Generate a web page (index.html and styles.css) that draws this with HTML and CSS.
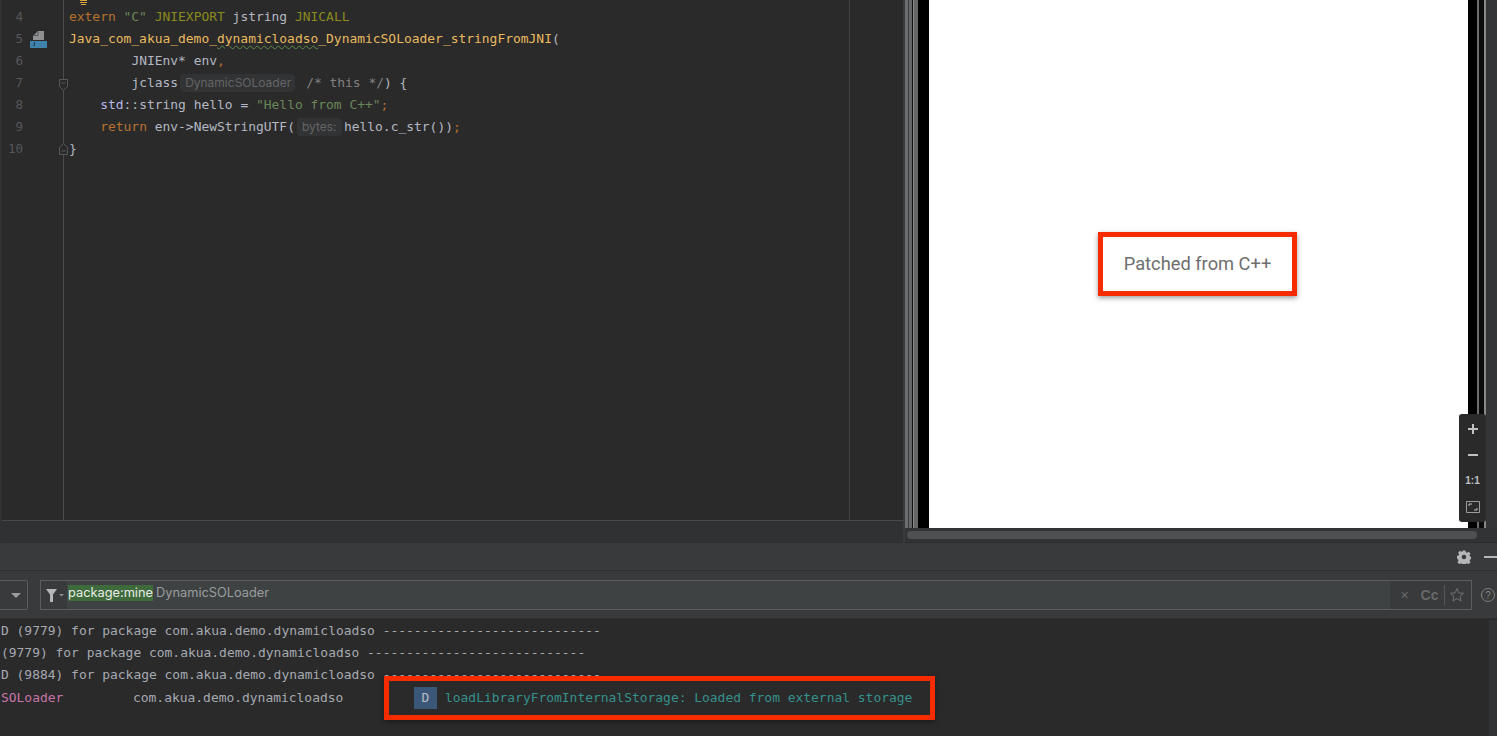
FILE: index.html
```html
<!DOCTYPE html>
<html lang="en">
<head>
<meta charset="utf-8">
<title>Android Studio</title>
<link rel="stylesheet" href="styles.css">
</head>
<body>
<div class="top">
  <section class="editor">
    <div class="editor-main">
      <div class="gutter">
        <div class="peek"></div>
        <div class="ln">4</div>
        <div class="ln">5
          <svg class="native-icon" width="18" height="18" viewBox="0 0 18 18"><path d="M3 9V5l5-5h6v9z" fill="#8f9193"/><path d="M8 .500v4H3.500" fill="none" stroke="#55575a"/><rect x="0" y="10" width="17" height="7" fill="#3f82ad"/><path d="M4.500 11v3.500H3" stroke="#24414f" stroke-width="1" fill="none"/></svg>
        </div>
        <div class="ln">6</div>
        <div class="ln">7
          <svg class="fold fold-start" width="11" height="15" viewBox="0 0 11 15"><path d="M1.500 1.500h8v7l-4 4-4-4zM3.500 5h4" fill="#2a2a2b" stroke="#55585a"/></svg>
        </div>
        <div class="ln">8</div>
        <div class="ln">9</div>
        <div class="ln">10
          <svg class="fold fold-end" width="11" height="15" viewBox="0 0 11 15"><path d="M1.500 13.500h8v-7l-4-4-4 4zM3.500 10h4" fill="#2a2a2b" stroke="#55585a"/></svg>
        </div>
      </div>
      <div class="code">
        <div class="peek"><svg class="bulb" width="7" height="6" viewBox="0 0 7 6"><path d="M0 .500h7M0 2.500h7M1 4.500h5" stroke="#d8a83c"/></svg></div>
        <div class="cl"><span class="kw">extern</span> <span class="str">"C"</span> <span class="mac">JNIEXPORT</span> <span class="id">jstring</span> <span class="mac">JNICALL</span></div>
        <div class="cl fn">Java_com_akua_demo_<span class="squig">dynamicloadso</span>_DynamicSOLoader_stringFromJNI<span class="id">(</span></div>
        <div class="cl i2"><span class="id">JNIEnv* env</span><span class="kw">,</span></div>
        <div class="cl i2"><span class="id">jclass</span><span class="hint hint-class">DynamicSOLoader</span><span class="cm">/* this */</span><span class="id">) {</span></div>
        <div class="cl i1"><span class="ns">std</span><span class="id">::string hello = </span><span class="str">"Hello from C++"</span><span class="kw">;</span></div>
        <div class="cl i1"><span class="kw">return</span> <span class="id">env-&gt;NewStringUTF(</span><span class="hint hint-bytes">bytes:</span><span class="id">hello.c_str())</span><span class="kw">;</span></div>
        <div class="cl"><span class="id">}</span></div>
      </div>
      <div class="rest"></div>
    </div>
    <div class="breadcrumb"></div>
  </section>
  <section class="device">
    <div class="device-view">
      <div class="bezel-l"></div>
      <div class="screen">
        <div class="patch-box">Patched from C++</div>
      </div>
      <div class="bezel-r"></div>
      <div class="zoom-tools">
        <svg width="26" height="26" viewBox="0 0 26 26"><path d="M13 8v10M8 13h10" stroke="#bfc1c2" stroke-width="2"/></svg>
        <svg width="26" height="26" viewBox="0 0 26 26"><path d="M8 13h10" stroke="#bfc1c2" stroke-width="2"/></svg>
        <span class="one">1:1</span>
        <svg width="26" height="26" viewBox="0 0 26 26"><path d="M6.500 7.500h13v11h-13z" fill="none" stroke="#9a9c9e"/><path d="M9 12v-2h3M17 14v2h-3" fill="none" stroke="#bfc1c2"/></svg>
      </div>
    </div>
    <div class="hscroll"><div class="thumb"></div></div>
  </section>
</div>
<div class="panel-head">
  <svg width="14" height="14" viewBox="0 0 14 14"><path fill="#b4b6b8" d="M5.600.500h2.800l.4 1.800 1.200.5 1.600-1 1.900 1.900-1 1.600.5 1.200 1.800.4v2.200l-1.800.4-.5 1.200 1 1.600-1.900 1.900-1.600-1-1.200.5-.4 1.800H5.600l-.4-1.800-1.200-.5-1.600 1-1.900-1.900 1-1.600-.5-1.200L-.2 8.100V5.900l1.800-.4.500-1.200-1-1.600 1.900-1.900 1.600 1 1.200-.5z"/><circle cx="7" cy="7" r="2.300" fill="#393b3d"/></svg>
  <span class="minimize"></span>
</div>
<div class="filter-bar">
  <div class="drop"><span class="caret"></span></div>
  <div class="search">
    <svg class="funnel" width="26" height="28" viewBox="0 0 26 28"><path d="M5 8h11L12 13.500V21H9V13.500z" fill="#b4b6b8"/><path d="M18 13h5l-2.500 2.500z" fill="#8c8e90"/></svg>
    <span class="tag">package:mine</span>
    <span class="query">DynamicSOLoader</span>
    <div class="search-tools">
      <span class="x">✕</span>
      <span class="cc">Cc</span>
      <span class="sep"></span>
      <svg width="16" height="16" viewBox="0 0 16 16"><path d="M8 1.500l1.900 4.400 4.700.4-3.600 3.100 1.100 4.600L8 11.600 3.900 14 5 9.400 1.400 6.300l4.700-.4z" fill="none" stroke="#6f7274"/></svg>
    </div>
  </div>
  <svg class="help" width="16" height="16" viewBox="0 0 16 16"><circle cx="8" cy="8" r="6.500" fill="none" stroke="#808386"/><text x="8" y="11.500" text-anchor="middle" class="help-q">?</text></svg>
</div>
<main class="log">
  <div class="ll">D (9779) for package com.akua.demo.dynamicloadso ----------------------------</div>
  <div class="ll">(9779) for package com.akua.demo.dynamicloadso ----------------------------</div>
  <div class="ll">D (9884) for package com.akua.demo.dynamicloadso ----------------------------</div>
  <div class="ll entry">
    <span class="tagname">SOLoader</span>
    <span class="pkg">com.akua.demo.dynamicloadso</span>
    <span class="level">D</span>
    <span class="msg">loadLibraryFromInternalStorage: Loaded from external storage</span>
  </div>
  <div class="log-box"></div>
  <div class="log-scroll"></div>
</main>
</body>
</html>
```
FILE: styles.css
```css
* { box-sizing: border-box; }
html, body { margin: 0; height: 100%; }
body {
  width: 1497px;
  height: 736px;
  overflow: hidden;
  background: #2a2a2b;
  font-family: "DejaVu Sans Mono", "Liberation Mono", monospace;
  font-size: 12.950px;
  display: flex;
  flex-direction: column;
}
.top { display: flex; height: 543px; flex: none; background: #323334; }

/* editor */
.editor { width: 905px; flex: none; display: flex; flex-direction: column; background: #2a2a2b; border-left: 2px solid #313233; border-right: 2px solid #3a3b3c; }
.editor-main { height: 521px; display: flex; border-bottom: 1px solid #48494a; flex: none; }
.gutter { width: 62px; flex: none; border-right: 1px solid #4a4b4c; color: #55575a; }
.peek { height: 6px; position: relative; }
.bulb { display: block; margin-left: 11px; }
.ln { height: 22px; line-height: 22px; width: 21px; text-align: right; position: relative; font-size: 12.500px; }
.native-icon { position: absolute; left: 28px; top: 3px; }
.fold { position: absolute; left: 56px; }
.fold-start { top: 6px; }
.fold-end { top: 3px; }
.code { width: 786px; flex: none; border-right: 1px solid #434445; padding-left: 5px; }
.rest { flex: 1; }
.cl { height: 22px; line-height: 22px; white-space: pre; }
.i1 { padding-left: 31.200px; }
.i2 { padding-left: 62.400px; }
.kw { color: #b8722f; }
.str { color: #6a8759; }
.mac { color: #8a8a1e; }
.id { color: #b4b8c2; }
.fn { color: #e9b95f; }
.ns { color: #b5b6e3; }
.cm { color: #808080; }
.squig { text-decoration: underline wavy #5f8c4a 1px; text-underline-offset: 2px; }
.hint { display: inline-block; height: 18px; line-height: 18px; font-family: "Inter", "Noto Sans", sans-serif; font-size: 12px; color: #646566; background: #323334; border-radius: 4px; padding: 0 5px; vertical-align: 0; }
.hint-class { width: 115px; margin: 0 11px 0 2px; }
.hint-bytes { width: 45px; margin: 0 2px 0 2px; }
.breadcrumb { flex: 1; background: #303132; }

/* device */
.device { flex: 1; min-width: 0; display: flex; flex-direction: column; }
.device-view { height: 528px; display: flex; position: relative; flex: none; }
.bezel-l { width: 24px; flex: none; background: linear-gradient(90deg, #6a6c6e 0 3px, #3b3d3f 3px 4px, #666 4px 7px, #111 7px 8px, #8a8a8a 8px 9px, #666 9px 13px, #000 13px 24px); }
.screen { width: 539px; flex: none; background: #fff; display: flex; align-items: center; justify-content: center; }
.bezel-r { flex: 1; background: linear-gradient(90deg, #000 0 9px, #6e6e6e 9px 11px, #0c0c0c 11px 16px, #888 16px 18px, #343536 18px); }
.patch-box { width: 199px; height: 64px; margin-right: 2px; padding-bottom: 2px; border: 5px solid #f62b00; box-shadow: 0 2px 5px rgba(0,0,0,.4); display: flex; align-items: center; justify-content: center; font-family: Roboto, sans-serif; font-size: 18.300px; color: #6e6e6e; }
.zoom-tools { position: absolute; left: 554px; top: 414px; width: 27px; height: 108px; padding-top: 2px; background: #2a2a2b; border-radius: 3px; display: flex; flex-direction: column; align-items: center; }
.zoom-tools svg { flex: none; display: block; }
.one { height: 26px; line-height: 26px; font-family: "Liberation Sans", sans-serif; font-size: 10px; font-weight: 700; color: #bfc1c2; }
.hscroll { height: 15px; flex: none; padding: 3px 20px 4px 2px; border-bottom: 1px solid #2b2c2d; }
.thumb { height: 8px; border-radius: 4px; background: #4e5052; }

/* tool window */
.panel-head { height: 28px; flex: none; background: #393a3b; border-bottom: 1px solid #2e2f30; display: flex; align-items: center; justify-content: flex-end; gap: 13px; }
.minimize { width: 13px; height: 2px; background: #b4b6b8; }
.filter-bar { height: 48px; flex: none; background: #393a3b; border-bottom: 1px solid #2e2f30; display: flex; align-items: center; padding-top: 1px; }
.drop { width: 28px; height: 30px; flex: none; border: 1px solid #5a5c5d; border-left: 0; border-radius: 0 2px 2px 0; display: flex; align-items: center; justify-content: center; padding-left: 4px; }
.caret { width: 0; height: 0; border: 5px solid transparent; border-top: 5px solid #9a9c9e; border-bottom: 0; }
.search { margin-left: 12px; width: 1432px; height: 30px; flex: none; border: 1px solid #5a5c5d; background: #3e4243; display: flex; align-items: center; font-family: "Inter", "Noto Sans", sans-serif; font-size: 12.800px; }
.funnel { flex: none; background: #393a3b; }
.tag { background: #3f6b3c; color: #e8ebe6; height: 16px; line-height: 16px; margin: 0 0 5px 1px; }
.query { color: #9a9d9f; margin: 0 0 5px 3px; }
.search-tools { margin-left: auto; width: 81px; height: 28px; flex: none; background: #393a3b; display: flex; align-items: center; color: #66696b; }
.x { width: 26px; text-align: center; font-size: 11px; margin-left: 1px; }
.cc { width: 25px; text-align: center; font-family: "Liberation Sans", sans-serif; font-weight: 700; font-size: 14px; }
.sep { width: 1px; height: 20px; background: #55585a; margin: 0 4px 0 2px; }
.help { margin-left: 8px; flex: none; }
.help-q { font-family: "Liberation Sans", sans-serif; font-size: 10px; fill: #808386; }

/* log */
.log { flex: 1; min-height: 0; background: #2a2a2b; padding: 1px 0 0 1px; position: relative; color: #a5a9b0; }
.ll { height: 22px; line-height: 22px; white-space: pre; }
.entry { display: flex; margin-top: 1px; }
.tagname { color: #c774a8; width: 132px; flex: none; }
.pkg { width: 281px; flex: none; }
.level { width: 23px; height: 22px; flex: none; text-align: center; background: #3a5779; color: #b7bcc2; margin-right: 8px; }
.msg { color: #35918b; }
.log-box { position: absolute; left: 384px; top: 57px; width: 551px; height: 44px; border: 5px solid #f62b00; box-shadow: 0 2px 5px rgba(0,0,0,.35); }
.log-scroll { position: absolute; right: 0; top: 1px; bottom: 0; width: 8px; background: #323334; }
```
